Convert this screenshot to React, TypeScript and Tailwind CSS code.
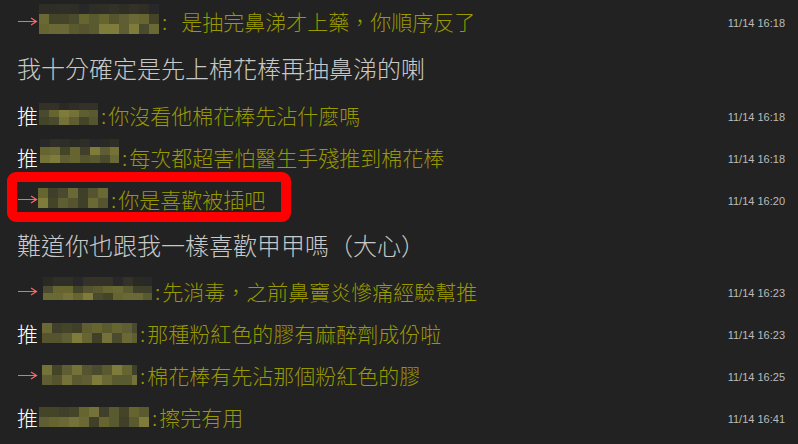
import React from 'react'

type Row =
  | { kind: 'push'; tag: '推' | '→'; blurX: number; blurW: number; blurRows: number[]; blurY: number; text: string; gap?: number; time: string; seed: number }
  | { kind: 'line'; text: string; h: number }

const rows: Row[] = [
  { kind: 'push', tag: '→', blurX: 39, blurW: 120, blurRows: [10, 10, 10], blurY: -2, text: '是抽完鼻涕才上藥，你順序反了', gap: 14, time: '11/14 16:18', seed: 3 },
  { kind: 'line', text: '我十分確定是先上棉花棒再抽鼻涕的喇', h: 52 },
  { kind: 'push', tag: '推', blurX: 39, blurW: 59, blurRows: [7, 7, 8], blurY: -1, text: '你沒看他棉花棒先沾什麼嗎', time: '11/14 16:18', seed: 7 },
  { kind: 'push', tag: '推', blurX: 40, blurW: 79, blurRows: [8, 8, 8], blurY: -6, text: '每次都超害怕醫生手殘推到棉花棒', time: '11/14 16:18', seed: 11 },
  { kind: 'push', tag: '→', blurX: 38, blurW: 70, blurRows: [10, 10], blurY: -1, text: '你是喜歡被插吧', time: '11/14 16:20', seed: 17 },
  { kind: 'line', text: '難道你也跟我一樣喜歡甲甲嗎（大心）', h: 50 },
  { kind: 'push', tag: '→', blurX: 43, blurW: 109, blurRows: [9, 7, 7], blurY: -3, text: '先消毒，之前鼻竇炎慘痛經驗幫推', time: '11/14 16:23', seed: 23 },
  { kind: 'push', tag: '推', blurX: 42, blurW: 95, blurRows: [10, 10], blurY: 0, text: '那種粉紅色的膠有麻醉劑成份啦', time: '11/14 16:23', seed: 29 },
  { kind: 'push', tag: '→', blurX: 42, blurW: 95, blurRows: [10, 10], blurY: 0, text: '棉花棒有先沾那個粉紅色的膠', time: '11/14 16:25', seed: 31 },
  { kind: 'push', tag: '推', blurX: 39, blurW: 110, blurRows: [10, 10], blurY: 0, text: '擦完有用', time: '11/14 16:41', seed: 37 },
]

// olive-ish tones of a blurred username
const tones = ['#4a4a2e', '#55542f', '#5f5d33', '#6a6835', '#747238', '#7e7b3b', '#444429', '#5a5a31', '#66652f', '#3f3f2a']
const faint = ['#2a2a25', '#2e2d26', '#333128', '#28282a', '#302f27']

function rand(seed: number) {
  let s = seed
  return () => {
    s = (s * 9301 + 49297) % 233280
    return s / 233280
  }
}

function Mosaic({ w, rowsH, seed }: { w: number; rowsH: number[]; seed: number }) {
  const r = rand(seed)
  const cols = Math.ceil(w / 10)
  const isFaintTop = rowsH.length === 3
  return (
    <div className="flex flex-col overflow-hidden" style={{ width: w }}>
      {rowsH.map((h, ri) => (
        <div key={ri} className="flex">
          {Array.from({ length: cols }).map((_, ci) => {
            const pal = isFaintTop && ri === 0 ? faint : tones
            const c = pal[Math.floor(r() * pal.length)]
            return <div key={ci} className="w-[10px] shrink-0" style={{ height: h, backgroundColor: c }} />
          })}
        </div>
      ))}
    </div>
  )
}

function Arrow() {
  return (
    <svg width="21" height="10" viewBox="0 0 21 10" className="block">
      <path d="M1 5.5H19M14 2L19.5 5.5L14 9" stroke="#ff6666" strokeWidth="1.2" fill="none" />
    </svg>
  )
}

export default function App() {
  return (
    <div className="relative w-[798px] h-[444px] overflow-hidden bg-[#222222] font-light font-['Noto_Sans_CJK_TC',sans-serif]">
      {rows.map((row, i) => {
        if (row.kind === 'line') {
          return (
            <div key={i} className="flex items-center pl-[17px] text-[24px] leading-none text-[#c8c8c8]" style={{ height: row.h }}>
              {row.text}
            </div>
          )
        }
        return (
          <div key={i} className="flex items-center h-[42px] pl-[17px] pr-[13px]">
            {row.tag === '推' ? (
              <span className="w-[21px] text-[21px] leading-none text-white">推</span>
            ) : (
              <span className="w-[21px]">
                <Arrow />
              </span>
            )}
            <div style={{ marginLeft: row.blurX - 38, marginTop: row.blurY * 2 }}>
              <Mosaic w={row.blurW} rowsH={row.blurRows} seed={row.seed} />
            </div>
            <span className="ml-[3px] text-[21px] leading-none text-[#999900]">:</span>
            <span className="text-[21px] leading-none text-[#999900]" style={{ marginLeft: row.gap ?? 2 }}>
              {row.text}
            </span>
            <span className="ml-auto pt-[5px] text-[11px] font-normal leading-none text-[#bbbbbb] font-['Liberation_Sans',sans-serif]">
              {row.time}
            </span>
          </div>
        )
      })}
      <div className="absolute left-[7px] top-[172px] w-[284px] h-[50px] rounded-[9px] border-[10px] border-[#ff0000]" />
    </div>
  )
}
